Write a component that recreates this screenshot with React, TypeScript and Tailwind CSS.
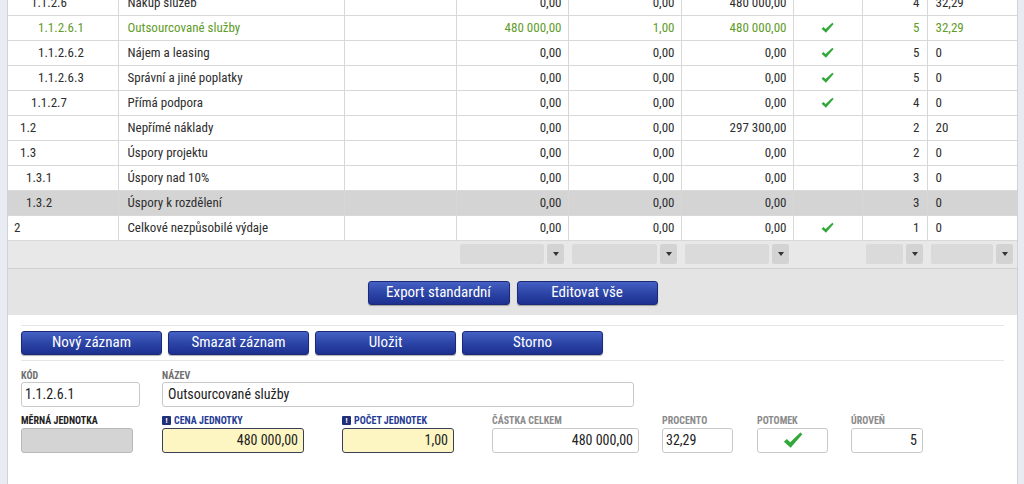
import React from 'react';

type Row = {
  code: string;
  level: number;
  name: string;
  a: string;
  b: string;
  c: string;
  check: boolean;
  lvl: string;
  pct: string;
  active?: boolean;
  selected?: boolean;
};

const rows: Row[] = [
  { code: '1.1.2.6', level: 4, name: 'Nákup služeb', a: '0,00', b: '0,00', c: '480 000,00', check: false, lvl: '4', pct: '32,29' },
  { code: '1.1.2.6.1', level: 5, name: 'Outsourcované služby', a: '480 000,00', b: '1,00', c: '480 000,00', check: true, lvl: '5', pct: '32,29', active: true },
  { code: '1.1.2.6.2', level: 5, name: 'Nájem a leasing', a: '0,00', b: '0,00', c: '0,00', check: true, lvl: '5', pct: '0' },
  { code: '1.1.2.6.3', level: 5, name: 'Správní a jiné poplatky', a: '0,00', b: '0,00', c: '0,00', check: true, lvl: '5', pct: '0' },
  { code: '1.1.2.7', level: 4, name: 'Přímá podpora', a: '0,00', b: '0,00', c: '0,00', check: true, lvl: '4', pct: '0' },
  { code: '1.2', level: 2, name: 'Nepřímé náklady', a: '0,00', b: '0,00', c: '297 300,00', check: false, lvl: '2', pct: '20' },
  { code: '1.3', level: 2, name: 'Úspory projektu', a: '0,00', b: '0,00', c: '0,00', check: false, lvl: '2', pct: '0' },
  { code: '1.3.1', level: 3, name: 'Úspory nad 10%', a: '0,00', b: '0,00', c: '0,00', check: false, lvl: '3', pct: '0' },
  { code: '1.3.2', level: 3, name: 'Úspory k rozdělení', a: '0,00', b: '0,00', c: '0,00', check: false, lvl: '3', pct: '0', selected: true },
  { code: '2', level: 1, name: 'Celkové nezpůsobilé výdaje', a: '0,00', b: '0,00', c: '0,00', check: true, lvl: '1', pct: '0' },
];

const indent: Record<number, string> = {
  1: 'pl-[6px]',
  2: 'pl-[12px]',
  3: 'pl-[18px]',
  4: 'pl-[23px]',
  5: 'pl-[30px]',
};

const Check = ({ className = 'w-[13px] h-[12px]' }: { className?: string }) => (
  <svg viewBox="0 0 14 12" className={className}>
    <path d="M0.6 6.8 L2.6 5 L5 7.2 L12.2 0.4 L13.6 1.6 L5.3 11.2 Z" fill="#31a83a" />
  </svg>
);

const Btn = ({ label, w = 'w-[141px]' }: { label: string; w?: string }) => (
  <button
    className={`${w} h-[24px] rounded-[3px] border border-[#1b2a78] bg-gradient-to-b from-[#4561c4] via-[#2c45a6] to-[#1d3090] text-white text-[15px] leading-none shadow-[0_1px_1px_rgba(0,0,0,0.3)]`}
  >
    {label}
  </button>
);

const FilterCell = ({ field }: { field: string }) => (
  <div className="flex items-center gap-[3px] px-[4px]">
    <div className={`${field} h-[20px] rounded-[2px] bg-[#dadada]`} />
    <div className="w-[17px] h-[20px] rounded-[2px] bg-[#d3d3d3] flex items-center justify-center">
      <span className="block w-0 h-0 border-l-[3px] border-r-[3px] border-t-[4px] border-l-transparent border-r-transparent border-t-[#333]" />
    </div>
  </div>
);

const Label = ({ text, tone }: { text: string; tone: 'gray' | 'dark' | 'blue' | 'light' }) => {
  const color =
    tone === 'dark' ? 'text-[#222]' : tone === 'blue' ? 'text-[#253b94]' : tone === 'light' ? 'text-[#8a8a8a]' : 'text-[#6e6e6e]';
  return (
    <div className={`flex items-center gap-[3px] h-[12px] text-[10px] font-bold uppercase leading-none ${color}`}>
      {tone === 'blue' && (
        <span className="w-[9px] h-[9px] rounded-[1px] bg-[#1f2f78] text-white text-[8px] font-bold flex items-center justify-center">
          !
        </span>
      )}
      {text}
    </div>
  );
};

export default function App() {
  return (
    <div className="w-[1024px] h-[484px] overflow-hidden flex bg-[#e9ebf2] text-[#333] font-['Roboto_Condensed','Liberation_Sans_Narrow','DejaVu_Sans_Condensed',sans-serif]">
      <div className="w-[8px] shrink-0 border-r border-[#cfd2da]" />
      <div className="w-[1009px] shrink-0 flex flex-col bg-white">
        {/* Grid */}
        <div className="-mt-[10px] bg-[#e4e4e4]">
          <table className="w-full table-fixed border-collapse text-[13px] bg-white">
            <colgroup>
              <col className="w-[110px]" />
              <col className="w-[226px]" />
              <col className="w-[112px]" />
              <col className="w-[112px]" />
              <col className="w-[113px]" />
              <col className="w-[112px]" />
              <col className="w-[69px]" />
              <col className="w-[65px]" />
              <col className="w-[90px]" />
            </colgroup>
            <tbody>
              {rows.map((r) => {
                const tone = r.active ? 'text-[#5f9c2a]' : 'text-[#2e2e2e]';
                const bg = r.selected ? 'bg-[#d4d4d4]' : 'bg-white';
                const cell = 'h-[25px] border-b border-r border-[#d8d8d8] whitespace-nowrap overflow-hidden';
                return (
                  <tr key={r.code} className={`${bg} ${tone}`}>
                    <td className={`${cell} ${indent[r.level]}`}>{r.code}</td>
                    <td className={`${cell} pl-[9px]`}>{r.name}</td>
                    <td className={cell}></td>
                    <td className={`${cell} text-right pr-[6px]`}>{r.a}</td>
                    <td className={`${cell} text-right pr-[6px]`}>{r.b}</td>
                    <td className={`${cell} text-right pr-[6px]`}>{r.c}</td>
                    <td className={`${cell} text-center`}>
                      {r.check && (
                        <span className="inline-flex align-middle">
                          <Check />
                        </span>
                      )}
                    </td>
                    <td className={`${cell} text-right pr-[7px]`}>{r.lvl}</td>
                    <td className={`${cell} pl-[8px] border-r-0`}>{r.pct}</td>
                  </tr>
                );
              })}
            </tbody>
          </table>

          {/* Filter row */}
          <div className="h-[28px] border-b border-[#cfcfcf] bg-[#e8e8e8] flex items-center">
            <div className="w-[448px]" />
            <div className="w-[112px]">
              <FilterCell field="w-[84px]" />
            </div>
            <div className="w-[113px]">
              <FilterCell field="w-[85px]" />
            </div>
            <div className="w-[112px]">
              <FilterCell field="w-[84px]" />
            </div>
            <div className="w-[69px]" />
            <div className="w-[65px]">
              <FilterCell field="w-[37px]" />
            </div>
            <div className="w-[90px]">
              <FilterCell field="w-[62px]" />
            </div>
          </div>

          {/* Grid actions */}
          <div className="h-[46px] flex items-center justify-center gap-[7px] pt-[2px]">
            <Btn label="Export standardní" w="w-[142px]" />
            <Btn label="Editovat vše" />
          </div>
        </div>

        {/* Detail form */}
        <div className="flex-1 bg-white px-[13px] pt-[10px]">
          <div className="border-t border-b border-[#e6e6e6] py-[5px] flex gap-[6px]">
            <Btn label="Nový záznam" />
            <Btn label="Smazat záznam" />
            <Btn label="Uložit" />
            <Btn label="Storno" />
          </div>

          <div className="mt-[9px] flex gap-[22px]">
            <div className="flex flex-col">
              <Label text="Kód" tone="gray" />
              <div className="w-[119px] h-[25px] rounded-[3px] border border-[#c9c9c9] bg-white px-[3px] flex items-center text-[14px] text-[#222]">
                1.1.2.6.1
              </div>
            </div>
            <div className="flex flex-col">
              <Label text="Název" tone="gray" />
              <div className="w-[472px] h-[25px] rounded-[3px] border border-[#c9c9c9] bg-white px-[5px] flex items-center text-[14px] text-[#222]">
                Outsourcované služby
              </div>
            </div>
          </div>

          <div className="mt-[8px] flex">
            <div className="flex flex-col gap-[1px] w-[141px]">
              <Label text="Měrná jednotka" tone="dark" />
              <div className="w-[112px] h-[25px] rounded-[3px] border border-[#b9b9b9] bg-[#d4d4d4]" />
            </div>
            <div className="flex flex-col gap-[1px] w-[180px]">
              <Label text="Cena jednotky" tone="blue" />
              <div className="w-[142px] h-[25px] rounded-[3px] border border-[#3a3f55] bg-[#fdf6c3] px-[5px] flex items-center justify-end text-[14px] text-[#222]">
                480 000,00
              </div>
            </div>
            <div className="flex flex-col gap-[1px] w-[150px]">
              <Label text="Počet jednotek" tone="blue" />
              <div className="w-[112px] h-[25px] rounded-[3px] border border-[#3a3f55] bg-[#fdf6c3] px-[5px] flex items-center justify-end text-[14px] text-[#222]">
                1,00
              </div>
            </div>
            <div className="flex flex-col gap-[1px] w-[170px]">
              <Label text="Částka celkem" tone="light" />
              <div className="w-[147px] h-[25px] rounded-[3px] border border-[#c9c9c9] bg-white px-[5px] flex items-center justify-end text-[14px] text-[#222]">
                480 000,00
              </div>
            </div>
            <div className="flex flex-col gap-[1px] w-[95px]">
              <Label text="Procento" tone="light" />
              <div className="w-[71px] h-[25px] rounded-[3px] border border-[#c9c9c9] bg-white px-[3px] flex items-center text-[14px] text-[#222]">
                32,29
              </div>
            </div>
            <div className="flex flex-col gap-[1px] w-[94px]">
              <Label text="Potomek" tone="light" />
              <div className="w-[71px] h-[25px] rounded-[3px] border border-[#c9c9c9] bg-white flex items-center justify-center">
                <Check className="w-[20px] h-[17px]" />
              </div>
            </div>
            <div className="flex flex-col gap-[1px]">
              <Label text="Úroveň" tone="light" />
              <div className="w-[72px] h-[25px] rounded-[3px] border border-[#c9c9c9] bg-white px-[5px] flex items-center justify-end text-[14px] text-[#222]">
                5
              </div>
            </div>
          </div>
        </div>
      </div>
      <div className="flex-1 border-l border-[#cfd2da]" />
    </div>
  );
}
